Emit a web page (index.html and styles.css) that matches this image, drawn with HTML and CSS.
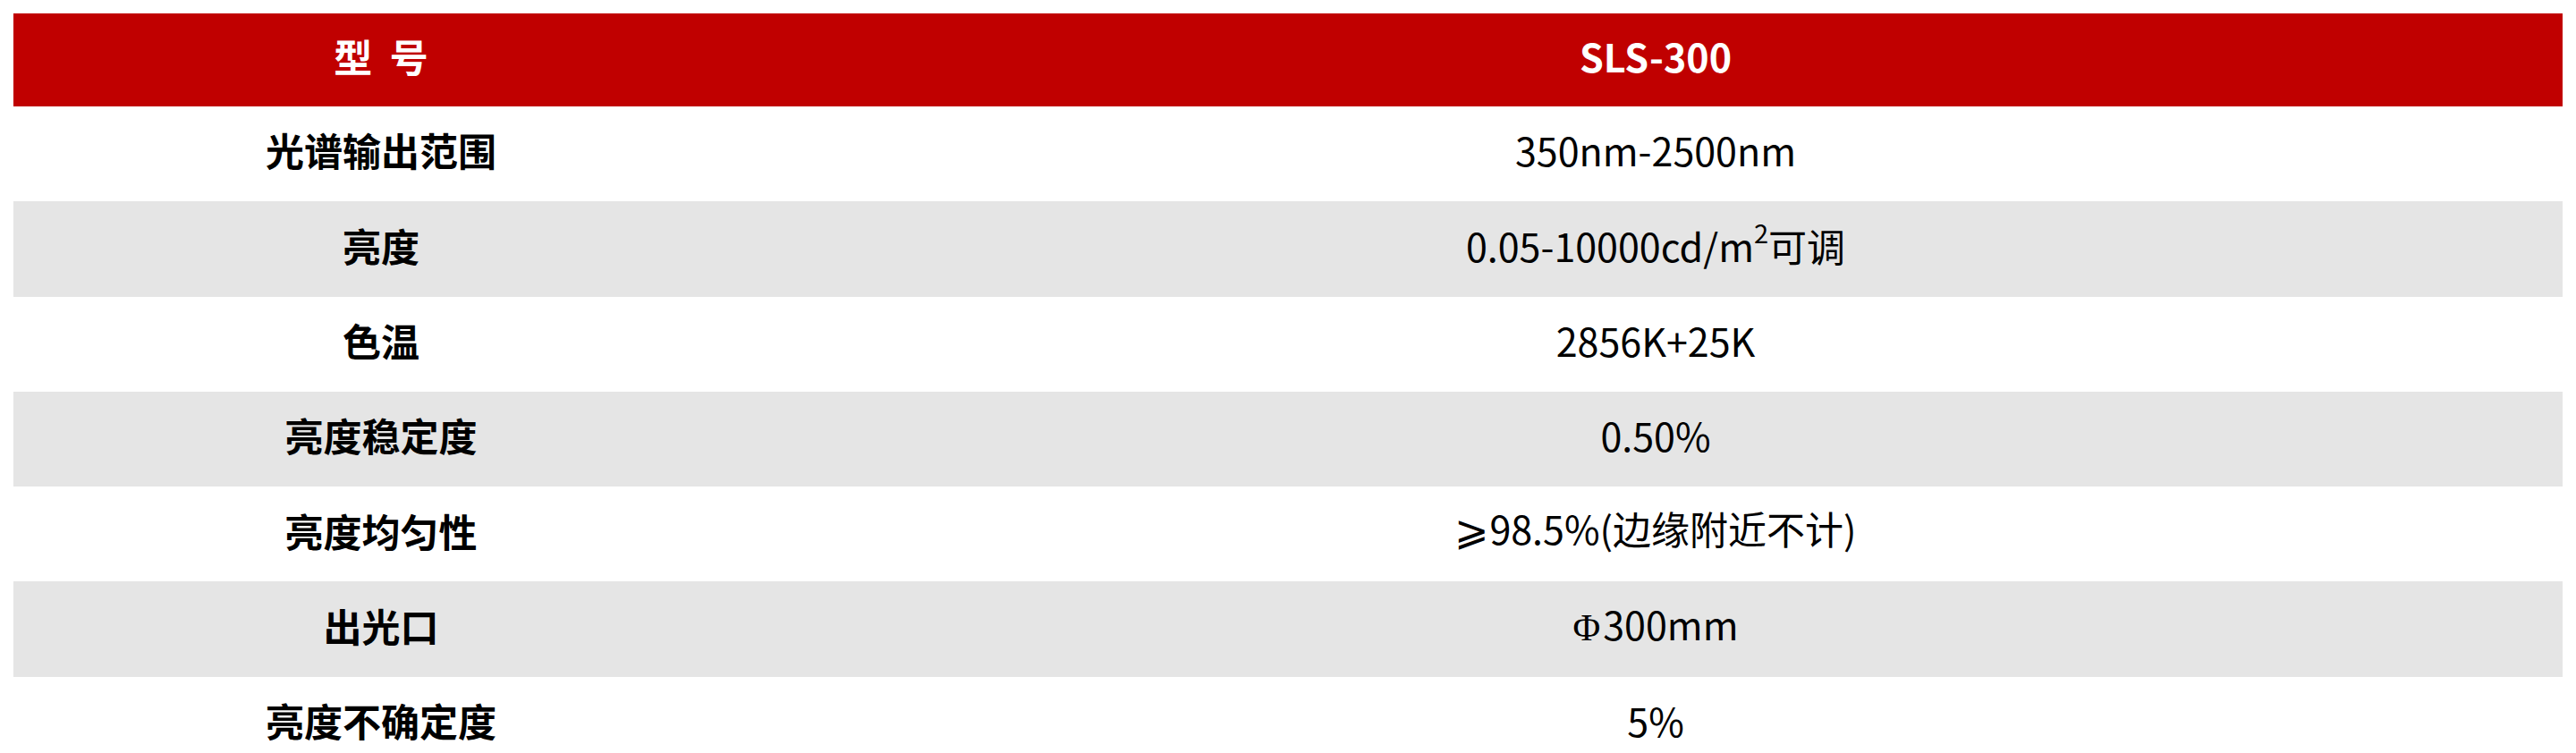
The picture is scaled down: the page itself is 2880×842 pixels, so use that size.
FILE: index.html
```html
<!DOCTYPE html>
<html lang="zh-CN">
<head>
<meta charset="utf-8">
<title>SLS-300</title>
<link rel="stylesheet" href="styles.css">
</head>
<body>
<div class="spec">
  <div class="row head"><div class="label">型&nbsp;&nbsp;号</div><div class="value">SLS-300</div></div>
  <div class="row"><div class="label">光谱输出范围</div><div class="value">350nm-2500nm</div></div>
  <div class="row alt"><div class="label">亮度</div><div class="value">0.05-10000cd/m<sup>2</sup>可调</div></div>
  <div class="row"><div class="label">色温</div><div class="value">2856K+25K</div></div>
  <div class="row alt"><div class="label">亮度稳定度</div><div class="value">0.50%</div></div>
  <div class="row"><div class="label">亮度均匀性</div><div class="value"><span class="geq">⩾</span>98.5%(边缘附近不计)</div></div>
  <div class="row alt"><div class="label">出光口</div><div class="value"><span class="phi">Φ</span>300mm</div></div>
  <div class="row"><div class="label">亮度不确定度</div><div class="value">5%</div></div>
</div>
</body>
</html>
```
FILE: styles.css
```css
html, body {
  margin: 0;
  padding: 0;
  background: #ffffff;
}
body {
  padding: 15px 15px 0 15px;
  font-family: "Noto Sans CJK SC", "Noto Sans", sans-serif;
  color: #000000;
}
.spec {
  display: flex;
  flex-direction: column;
}
.row {
  display: grid;
  grid-template-columns: 822px 1fr;
  box-sizing: border-box;
  height: 106.3px;
  padding-bottom: 8px;
  align-items: center;
  font-size: 43px;
  line-height: 1.2;
  background: #ffffff;
}
.row.alt {
  background: #e5e5e5;
}
.row.head {
  height: 104px;
  background: #c00000;
  color: #ffffff;
}
.label {
  text-align: center;
  font-weight: 700;
}
.value {
  text-align: center;
  font-weight: 400;
}
.head .value {
  font-weight: 700;
}
sup {
  font-size: 29px;
  vertical-align: 21px;
  line-height: 0;
}
.phi {
  font-family: "Liberation Serif", serif;
  font-size: 42px;
  margin-right: 3px;
}
.geq {
  font-family: "DejaVu Sans", sans-serif;
  font-weight: 300;
  font-size: 46px;
}
```
